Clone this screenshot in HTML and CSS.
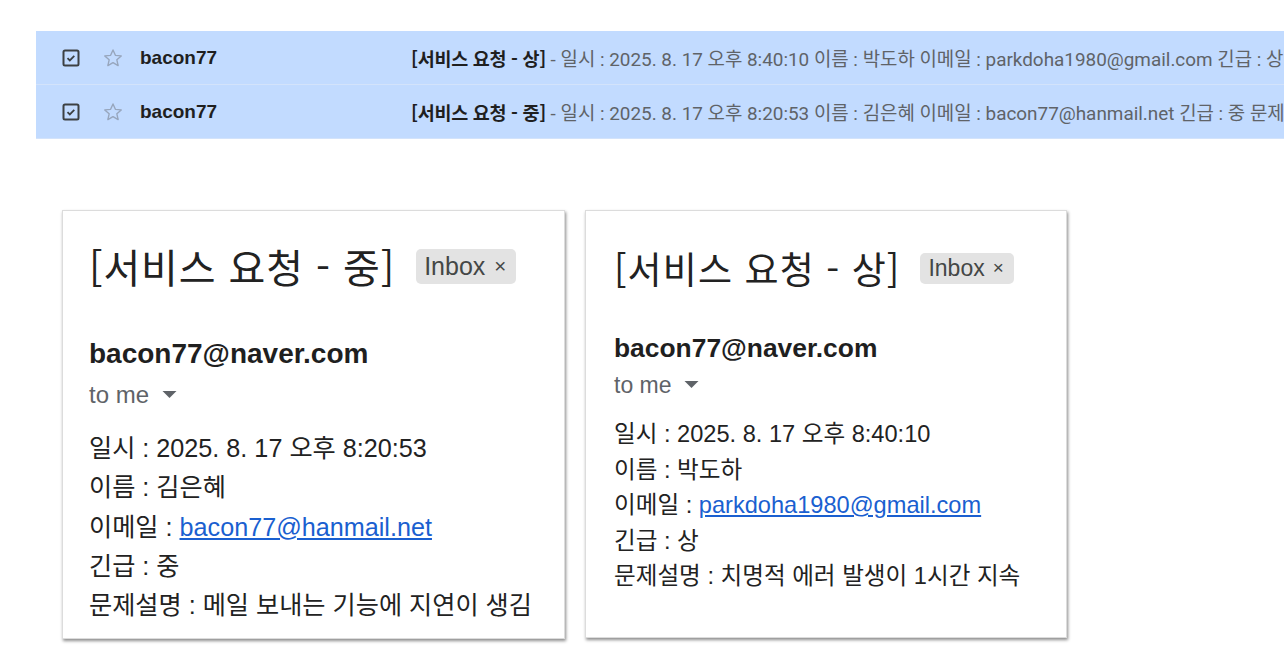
FILE: index.html
```html
<!DOCTYPE html>
<html lang="ko">
<head>
<meta charset="utf-8">
<title>Mail</title>
<link rel="stylesheet" href="styles.css">
</head>
<body>
<div class="list">
  <div class="row">
    <span class="check"><svg width="18" height="18" viewBox="0 0 18 18"><rect x="1.5" y="1.5" width="15" height="15" rx="1.5" fill="none" stroke="#3c4043" stroke-width="2"/><path d="M5.5 9.2l2.3 2.2 4.5-4.5" fill="none" stroke="#3c4043" stroke-width="1.8"/></svg></span>
    <span class="star"><svg width="22" height="22" viewBox="0 0 24 24"><path d="M12 3.2l2.6 5.9 6.4.6-4.8 4.3 1.4 6.3L12 17l-5.6 3.3 1.4-6.3L3 9.7l6.4-.6z" fill="none" stroke="#97a6bd" stroke-width="1.5" stroke-linejoin="round"/></svg></span>
    <span class="from">bacon77</span>
    <span class="subj"><b>[서비스 요청 - 상]</b> - 일시 : 2025. 8. 17 오후 8:40:10 이름 : 박도하 이메일 : parkdoha1980@gmail.com 긴급 : 상 문제설명 : 치명적 에러 발생이 1시간 지속</span>
  </div>
  <div class="row">
    <span class="check"><svg width="18" height="18" viewBox="0 0 18 18"><rect x="1.5" y="1.5" width="15" height="15" rx="1.5" fill="none" stroke="#3c4043" stroke-width="2"/><path d="M5.5 9.2l2.3 2.2 4.5-4.5" fill="none" stroke="#3c4043" stroke-width="1.8"/></svg></span>
    <span class="star"><svg width="22" height="22" viewBox="0 0 24 24"><path d="M12 3.2l2.6 5.9 6.4.6-4.8 4.3 1.4 6.3L12 17l-5.6 3.3 1.4-6.3L3 9.7l6.4-.6z" fill="none" stroke="#97a6bd" stroke-width="1.5" stroke-linejoin="round"/></svg></span>
    <span class="from">bacon77</span>
    <span class="subj"><b>[서비스 요청 - 중]</b> - 일시 : 2025. 8. 17 오후 8:20:53 이름 : 김은혜 이메일 : bacon77@hanmail.net 긴급 : 중 문제설명 : 메일 보내는 기능에 지연이 생김</span>
  </div>
</div>

<div class="cards">
  <div class="card card-a">
    <div class="title-row">
      <span class="title">[서비스 요청 - 중]</span>
      <span class="chip">Inbox <span class="x">×</span></span>
    </div>
    <div class="sender">bacon77@naver.com</div>
    <div class="tome">to me <svg class="caret" width="15" height="8" viewBox="0 0 14 8"><path d="M0 0h14L7 7z" fill="#5f6368"/></svg></div>
    <div class="body">
      <div>일시 : 2025. 8. 17 오후 8:20:53</div>
      <div>이름 : 김은혜</div>
      <div>이메일 : <a href="#">bacon77@hanmail.net</a></div>
      <div>긴급 : 중</div>
      <div>문제설명 : 메일 보내는 기능에 지연이 생김</div>
    </div>
  </div>
  <div class="card card-b">
    <div class="title-row">
      <span class="title">[서비스 요청 - 상]</span>
      <span class="chip">Inbox <span class="x">×</span></span>
    </div>
    <div class="sender">bacon77@naver.com</div>
    <div class="tome">to me <svg class="caret" width="15" height="8" viewBox="0 0 14 8"><path d="M0 0h14L7 7z" fill="#5f6368"/></svg></div>
    <div class="body">
      <div>일시 : 2025. 8. 17 오후 8:40:10</div>
      <div>이름 : 박도하</div>
      <div>이메일 : <a href="#">parkdoha1980@gmail.com</a></div>
      <div>긴급 : 상</div>
      <div>문제설명 : 치명적 에러 발생이 1시간 지속</div>
    </div>
  </div>
</div>
</body>
</html>
```

FILE: styles.css
```css
html, body {
  margin: 0;
  padding: 0;
  background: #ffffff;
}
body {
  font-family: "Liberation Sans", "Noto Sans CJK KR", sans-serif;
  color: #202124;
  width: 1284px;
  height: 656px;
  overflow: hidden;
}

/* message list */
.list {
  margin: 31px 0 0 36px;
  width: 1248px;
  background: #c2dbff;
  overflow: hidden;
}
.row {
  display: flex;
  align-items: center;
  height: 53px;
  border-bottom: 1px solid #d3e3fb;
  white-space: nowrap;
}
.check {
  flex: none;
  display: flex;
  width: 18px;
  height: 18px;
  margin-left: 26px;
}
.star {
  flex: none;
  display: flex;
  margin-left: 22px;
  width: 22px;
  height: 22px;
}
.from {
  flex: none;
  margin-left: 16px;
  width: 271px;
  font-size: 19px;
  font-weight: bold;
  color: #1f1f1f;
}
.subj {
  flex: 1 1 auto;
  min-width: 0;
  font-family: "Roboto", "Noto Sans CJK KR", sans-serif;
  font-size: 18.9px;
  color: #5f6368;
  overflow: hidden;
}
.subj b {
  color: #1f1f1f;
  font-weight: 700;
  font-family: "Noto Sans CJK KR", sans-serif;
  font-size: 18.5px;
  letter-spacing: -0.3px;
}

/* cards */
.cards {
  display: flex;
  align-items: flex-start;
  gap: 20px;
  margin: 71px 0 0 62px;
}
.card {
  box-sizing: border-box;
  background: #fff;
  border: 1px solid #dcdcdc;
  box-shadow: 1px 2px 3px rgba(0, 0, 0, 0.45);
  flex: none;
}
.title-row {
  display: flex;
  align-items: center;
}
.title {
  font-family: "Noto Sans CJK KR", sans-serif;
  font-weight: 400;
  color: #222;
}
.chip {
  background: #e3e3e3;
  border-radius: 5px;
  color: #444746;
  font-family: "Liberation Sans", sans-serif;
  display: inline-flex;
  align-items: center;
}
.chip .x {
  font-size: 0.82em;
}
.sender {
  font-weight: bold;
  color: #1f1f1f;
}
.tome {
  color: #5f6368;
  display: flex;
  align-items: center;
}
.body {
  font-family: "Liberation Sans", "Noto Sans CJK KR", sans-serif;
  color: #222;
}
.body a {
  color: #1a5fd0;
  text-decoration: underline;
}

.card-a {
  width: 503px;
  height: 429px;
  padding: 33px 0 0 26px;
}
.card-a .title { font-size: 40px; line-height: 44px; letter-spacing: 0.9px; }
.card-a .chip { font-size: 25px; height: 35px; padding: 0 10px 0 8px; margin-left: 21px; }
.card-a .chip .x { margin-left: 9px; }
.card-a .sender { font-size: 28px; line-height: 32px; margin-top: 50px; }
.card-a .tome { font-size: 24px; line-height: 28px; margin-top: 11px; }
.card-a .caret { margin-left: 13px; }
.card-a .body { font-size: 25.2px; line-height: 39.3px; margin-top: 20px; }

.card-b {
  width: 482px;
  height: 428px;
  padding: 35px 0 0 28px;
}
.card-b .title { font-size: 37px; line-height: 44px; letter-spacing: 1.1px; }
.card-b .chip { font-size: 23px; height: 31px; padding: 0 10px 0 8px; margin-left: 20px; }
.card-b .chip .x { margin-left: 8px; }
.card-b .sender { font-size: 26.4px; line-height: 30px; margin-top: 43px; }
.card-b .tome { font-size: 23px; line-height: 26px; margin-top: 9px; }
.card-b .caret { margin-left: 12px; }
.card-b .body { font-size: 23.6px; line-height: 35.5px; margin-top: 19px; }
```
